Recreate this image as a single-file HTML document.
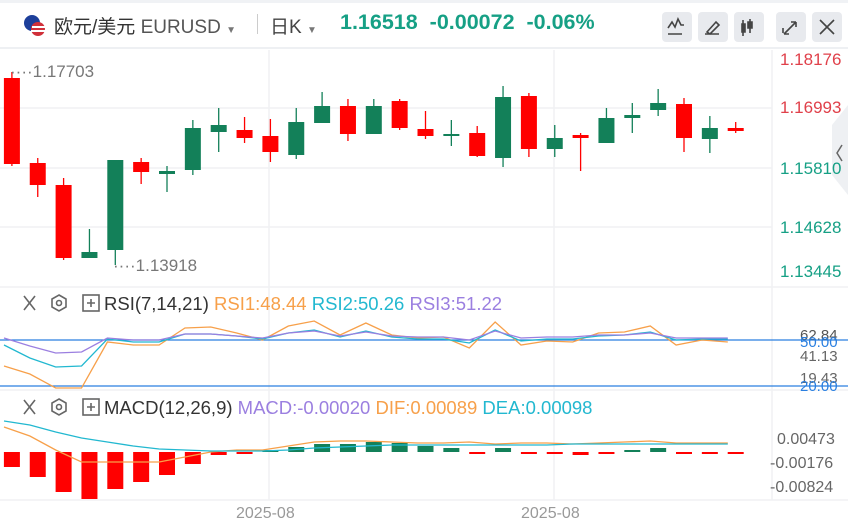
<!DOCTYPE html>
<html><head><meta charset="utf-8"><style>
body{margin:0;width:848px;height:531px;background:#fff;overflow:hidden;font-family:"Liberation Sans","Noto Sans CJK SC",sans-serif;position:relative}
.hdr{position:absolute;left:0;top:0;width:848px;height:49px;border-bottom:2px solid #eef0f3;box-sizing:border-box}
.t{position:absolute;white-space:nowrap}
.btn{position:absolute;top:12px;width:30px;height:30px;background:#e8eaee;border-radius:4px}
</style></head><body>
<div style="position:absolute;left:0;top:0;width:848px;height:3px;background:#f0f2f5"></div>
<div class="hdr"></div>
<svg class="t" style="left:22px;top:13px" width="26" height="26"><circle cx="10" cy="10" r="8" fill="#1d3f9a"/><circle cx="16" cy="16" r="7" fill="#d0303a"/><rect x="10" y="13" width="13" height="2" fill="#fff"/><rect x="9" y="17" width="14" height="2" fill="#fff"/></svg>
<div class="t" style="left:54px;top:12px;font-size:19px;color:#333">欧元/美元 <span style="color:#555">EURUSD</span> <span style="font-size:10px;color:#777">▼</span></div>
<div class="t" style="left:257px;top:14px;width:1px;height:20px;background:#ccc"></div>
<div class="t" style="left:270px;top:12px;font-size:19px;color:#444">日K <span style="font-size:10px;color:#777">▼</span></div>
<div class="t" style="left:340px;top:10px;font-size:21.5px;font-weight:bold;color:#16a085">1.16518 &nbsp;-0.00072 &nbsp;-0.06%</div>
<div class="btn" style="left:662px"></div><div class="btn" style="left:698px"></div><div class="btn" style="left:734px"></div><div class="btn" style="left:776px"></div><div class="btn" style="left:812px"></div>
<svg class="t" style="left:0;top:0" width="848" height="49" stroke="#444" fill="none" stroke-width="1.6">
<path d="M668 28l4-6 3 5 3-8 3 6h3M668 34h14"/><path d="M705 34h14M707 32l9-10 3 3-9 9z"/><path d="M743 20v16M742 24h3v8h-3zM750 19v14M748 22h4v6h-4z" fill="#444"/><path d="M784 34l12-12M783 33v-5M784 34h5M796 22v5M796 22h-5"/><path d="M820 20l14 14M834 20l-14 14"/>
</svg>
<svg class="t" style="left:0;top:50px" width="848" height="481">
<g stroke="#f0f1f4" stroke-width="1.5"><line x1="0" y1="58" x2="772" y2="58"/><line x1="0" y1="118" x2="772" y2="118"/><line x1="0" y1="177" x2="772" y2="177"/><line x1="269" y1="0" x2="269" y2="450"/><line x1="554" y1="0" x2="554" y2="450"/><line x1="772" y1="0" x2="772" y2="450"/><line x1="0" y1="237" x2="848" y2="237"/><line x1="0" y1="340" x2="848" y2="340"/><line x1="0" y1="450" x2="848" y2="450"/></g>
<path d="M832 75v50l16 20V55z" fill="#eef0f3"/><path d="M842 95l-5 8 5 8" stroke="#666" fill="none" stroke-width="1.5"/>
</svg>
<svg class="t" style="left:0;top:0" width="772" height="290" id="c"></svg>
<div class="t" style="left:10px;top:62px;font-size:17px;color:#777">····1.17703</div>
<div class="t" style="left:113px;top:256px;font-size:17px;color:#777">····1.13918</div>
<div class="t" style="left:780px;top:50px;font-size:17px;color:#e0404a">1.18176</div>
<div class="t" style="left:780px;top:98px;font-size:17px;color:#e0404a">1.16993</div>
<div class="t" style="left:780px;top:159px;font-size:17px;color:#16a085">1.15810</div>
<div class="t" style="left:780px;top:218px;font-size:17px;color:#16a085">1.14628</div>
<div class="t" style="left:780px;top:262px;font-size:17px;color:#16a085">1.13445</div>
<svg class="t" style="left:0;top:0" width="110" height="531" stroke="#666" fill="none" stroke-width="1.6">
<path d="M24 296l11 14M35 296l-11 14"/><path d="M59 295l7 4v8l-7 4-7-4v-8z"/><circle cx="59" cy="303" r="2.5"/><rect x="83" y="295" width="16" height="16"/><path d="M91 299v8M87 303h8"/>
<path d="M24 400l11 14M35 400l-11 14"/><path d="M59 399l7 4v8l-7 4-7-4v-8z"/><circle cx="59" cy="407" r="2.5"/><rect x="83" y="399" width="16" height="16"/><path d="M91 403v8M87 407h8"/>
</svg>
<div class="t" style="left:104px;top:293px;font-size:18.5px;color:#555"><span style="color:#333">RSI(7,14,21)</span> <span style="color:#f7a04a">RSI1:48.44</span> <span style="color:#22b8d0">RSI2:50.26</span> <span style="color:#9b7fe0">RSI3:51.22</span></div>
<div class="t" style="left:104px;top:397px;font-size:18.5px;color:#555"><span style="color:#333">MACD(12,26,9)</span> <span style="color:#9b7fe0">MACD:-0.00020</span> <span style="color:#f7a04a">DIF:0.00089</span> <span style="color:#22b8d0">DEA:0.00098</span></div>
<div class="t" style="left:800px;top:327px;font-size:15px;color:#555">62.84</div>
<div class="t" style="left:800px;top:334px;font-size:15px;color:#2a7fe0">50.00</div>
<div class="t" style="left:800px;top:348px;font-size:15px;color:#666">41.13</div>
<div class="t" style="left:800px;top:370px;font-size:15px;color:#666">19.43</div>
<div class="t" style="left:800px;top:378px;font-size:15px;color:#2a7fe0">20.00</div>
<div class="t" style="left:777px;top:431px;font-size:16px;color:#666">0.00473</div>
<div class="t" style="left:770px;top:455px;font-size:16px;color:#666">-0.00176</div>
<div class="t" style="left:770px;top:479px;font-size:16px;color:#666">-0.00824</div>
<div class="t" style="left:236px;top:505px;font-size:16px;color:#999">2025-08</div>
<div class="t" style="left:521px;top:505px;font-size:16px;color:#999">2025-08</div>
<svg class="t" style="left:0;top:0" width="848" height="531" id="ind"></svg>
<script>
var d=[[0,78,164,72,166],[0,163,185,158,197],[0,185,258,178,260],[1,252,258,229,258],[1,160,250,160,265],[0,162,172,158,184],[1,171,174,166,192],[1,128,170,120,175],[1,125,132,108,152],[0,130,138,117,143],[0,136,152,119,162],[1,122,155,108,159],[1,106,123,92,123],[0,106,134,99,141],[1,106,134,99,134],[0,101,128,99,130],[0,129,136,111,139],[1,134,136,120,146],[0,133,156,126,157],[1,97,158,86,167],[0,96,149,93,157],[1,138,149,125,157],[0,135,138,133,171],[1,118,143,108,143],[1,115,118,103,133],[1,103,110,89,116],[0,104,138,98,152],[1,128,139,116,153],[0,128,131,122,133]];
var s='';d.forEach(function(c,i){var x=11.9+i*25.85,col=c[0]?'#138059':'#ff0000';s+='<line x1="'+x+'" y1="'+c[3]+'" x2="'+x+'" y2="'+c[4]+'" stroke="'+col+'" stroke-width="1.3"/><rect x="'+(x-8)+'" y="'+c[1]+'" width="16" height="'+Math.max(c[2]-c[1],2)+'" fill="'+col+'"/>';});
document.getElementById('c').innerHTML=s;
function pl(a,col){var p='';a.forEach(function(v,i){p+=(i?'L':'M')+(4+i*25.85)+' '+v;});return '<path d="'+p+'" fill="none" stroke="'+col+'" stroke-width="1.3"/>';}
var r1=[366,374,388,388,342,345,345,328,327,333,340,326,321,335,323,335,338,337,348,322,345,341,342,333,332,326,345,340,342];
var r2=[345,358,367,366,339,342,342,334,334,336,339,333,330,337,331,337,339,339,343,330,341,339,339,336,335,332,340,339,339];
var r3=[338,346,353,352,338,340,340,334,334,336,338,333,331,336,332,336,337,337,340,331,338,337,337,335,335,333,338,338,338];
var h='<line x1="0" y1="340" x2="848" y2="340" stroke="#2a7fe0" stroke-width="1.3"/><line x1="0" y1="386" x2="848" y2="386" stroke="#2a7fe0" stroke-width="1.3"/>';
h+=pl(r1,'#f7a04a')+pl(r2,'#22b8d0')+pl(r3,'#9b7fe0');
var m=[-15,-25,-40,-47,-37,-30,-23,-12,-3,-2,2,5,8,8,10,9,6,4,-2,4,-2,-2,-3,-2,2,4,-2,-2,-2];
m.forEach(function(v,i){var x=11.9+i*25.85;var col=v<0?'#ff0000':'#138059';var s2=Math.max(Math.abs(v),2);h+='<rect x="'+(x-8)+'" y="'+(v<0?452:452-Math.abs(v))+'" width="16" height="'+s2+'" fill="'+col+'"/>';});
var dif=[427,436,450,462,462,462,462,457,452,450,450,446,442,441,441,442,443,443,442,444,443,443,444,443,442,441,443,443,443];
var dea=[421,425,432,438,442,446,449,450,451,451,451,450,448,447,446,445,445,445,445,445,445,445,444,444,444,444,444,444,444];
h+=pl(dif,'#f7a04a')+pl(dea,'#22b8d0');
document.getElementById('ind').innerHTML=h;
</script>
</body></html>
